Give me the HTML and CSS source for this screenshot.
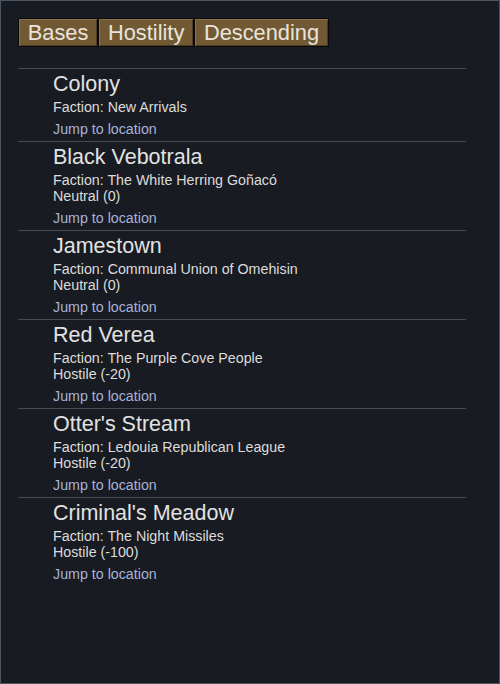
FILE: index.html
```html
<!DOCTYPE html>
<html>
<head>
<meta charset="utf-8">
<link rel="stylesheet" href="styles.css">
</head>
<body>
<div class="page">
  <div class="toolbar">
    <button class="btn">Bases</button>
    <button class="btn">Hostility</button>
    <button class="btn">Descending</button>
  </div>
  <ul class="list">
    <li class="item">
      <div class="title">Colony</div>
      <div class="info">Faction: New Arrivals</div>
      <a class="jump">Jump to location</a>
    </li>
    <li class="item">
      <div class="title">Black Vebotrala</div>
      <div class="info">Faction: The White Herring Goñacó<br>Neutral (0)</div>
      <a class="jump">Jump to location</a>
    </li>
    <li class="item">
      <div class="title">Jamestown</div>
      <div class="info">Faction: Communal Union of Omehisin<br>Neutral (0)</div>
      <a class="jump">Jump to location</a>
    </li>
    <li class="item">
      <div class="title">Red Verea</div>
      <div class="info">Faction: The Purple Cove People<br>Hostile (-20)</div>
      <a class="jump">Jump to location</a>
    </li>
    <li class="item">
      <div class="title">Otter's Stream</div>
      <div class="info">Faction: Ledouia Republican League<br>Hostile (-20)</div>
      <a class="jump">Jump to location</a>
    </li>
    <li class="item">
      <div class="title">Criminal's Meadow</div>
      <div class="info">Faction: The Night Missiles<br>Hostile (-100)</div>
      <a class="jump">Jump to location</a>
    </li>
  </ul>
</div>
</body>
</html>
```
FILE: styles.css
```css
* { box-sizing: border-box; }
html, body {
  margin: 0;
  padding: 0;
  background: #181b21;
}
.page {
  width: 500px;
  height: 684px;
  border: 1px solid #4c5563;
  background: #181b21;
  padding: 17px;
  font-family: "Liberation Sans", Arial, sans-serif;
  color: #dcdcdc;
  display: flex;
  flex-direction: column;
}
.toolbar {
  display: flex;
}
.btn {
  font-family: "Liberation Sans", Arial, sans-serif;
  font-size: 21.8px;
  line-height: 25px;
  height: 29px;
  padding: 0 8.8px;
  margin: 0;
  color: #e8e4dc;
  background: #715a33;
  border: 1px solid #0a0a0a;
  box-shadow: inset 1px 1px 0 #8d7249, inset -1px -1px 0 #4c3b1f;
}
.list {
  list-style: none;
  margin: 21px 0 0 0;
  padding: 0;
  width: 448px;
}
.item {
  border-top: 1px solid #464b52;
  padding: 3px 0 4px 35px;
  display: flex;
  flex-direction: column;
  align-items: flex-start;
}
.title {
  font-size: 21.5px;
  line-height: 24px;
  color: #e2e2e2;
}
.info {
  margin-top: 3px;
  font-size: 14.25px;
  line-height: 16px;
  color: #dcdcdc;
}
.jump {
  margin-top: 6px;
  font-size: 14.25px;
  line-height: 16px;
  color: #a6b2d8;
  text-decoration: none;
}
```
